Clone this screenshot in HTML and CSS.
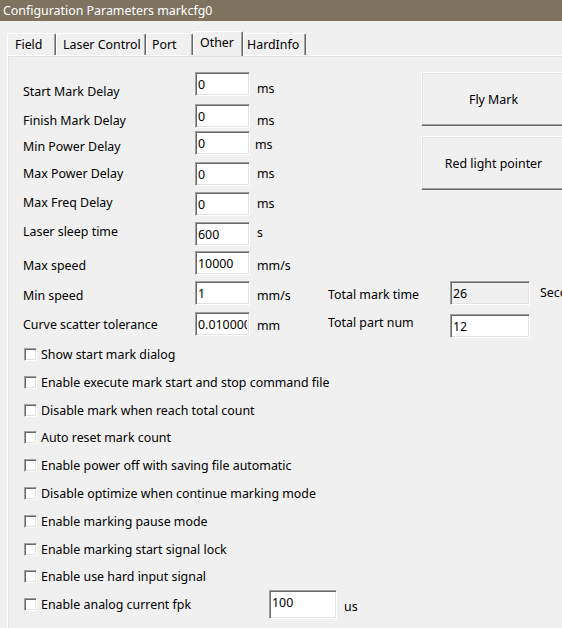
FILE: index.html
```html
<!DOCTYPE html>
<html>
<head>
<meta charset="utf-8">
<meta name="viewport" content="width=device-width, initial-scale=1">
<link rel="stylesheet" href="styles.css">
</head>
<body>

<div class="titlebar">Configuration Parameters markcfg0</div>

<div class="tabs">
  <div class="tab tab--field">Field</div>
  <div class="tab tab--laser">Laser Control</div>
  <div class="tab tab--port">Port</div>
  <div class="tab tab--other tab--active">Other</div>
  <div class="tab tab--hard">HardInfo</div>
</div>

<div class="panel">

  <div class="top">
    <div class="delays">
      <div class="row"><span class="label">Start Mark Delay</span><input class="field" value="0"><span class="unit">ms</span></div>
      <div class="row"><span class="label">Finish Mark Delay</span><input class="field" value="0"><span class="unit">ms</span></div>
      <div class="row"><span class="label">Min Power Delay</span><input class="field" value="0"><span class="unit">ms</span></div>
      <div class="row"><span class="label">Max Power Delay</span><input class="field" value="0"><span class="unit">ms</span></div>
      <div class="row"><span class="label">Max Freq Delay</span><input class="field" value="0"><span class="unit">ms</span></div>
      <div class="row"><span class="label">Laser sleep time</span><input class="field" value="600"><span class="unit">s</span></div>
      <div class="row"><span class="label">Max speed</span><input class="field" value="10000"><span class="unit">mm/s</span></div>
    </div>
    <div class="actions">
      <button class="btn">Fly Mark</button>
      <button class="btn">Red light pointer</button>
    </div>
  </div>

  <div class="totals">
    <div class="row">
      <span class="label">Min speed</span><input class="field" value="1"><span class="unit">mm/s</span>
      <span class="total-label">Total mark time</span><input class="field field--wide field--off" value="26" readonly><span class="total-unit">Second</span>
    </div>
    <div class="row">
      <span class="label">Curve scatter tolerance</span><input class="field" value="0.010000"><span class="unit">mm</span>
      <span class="total-label">Total part num</span><input class="field field--wide" value="12">
    </div>
  </div>

  <ul class="checks">
    <li class="check"><span class="box"></span><span class="check-text">Show start mark dialog</span></li>
    <li class="check"><span class="box"></span><span class="check-text">Enable execute mark start and stop command file</span></li>
    <li class="check"><span class="box"></span><span class="check-text">Disable mark when reach total count</span></li>
    <li class="check"><span class="box"></span><span class="check-text">Auto reset mark count</span></li>
    <li class="check"><span class="box"></span><span class="check-text">Enable power off with saving file automatic</span></li>
    <li class="check"><span class="box"></span><span class="check-text">Disable optimize when continue marking mode</span></li>
    <li class="check"><span class="box"></span><span class="check-text">Enable marking pause mode</span></li>
    <li class="check"><span class="box"></span><span class="check-text">Enable marking start signal lock</span></li>
    <li class="check"><span class="box"></span><span class="check-text">Enable use hard input signal</span></li>
    <li class="check"><span class="box"></span><span class="check-text check-text--fixed">Enable analog current fpk</span><input class="field field--fpk" value="100"><span class="unit">us</span></li>
  </ul>

</div>

</body>
</html>
```

FILE: styles.css
```css
/* base */
* {box-sizing: border-box;}

body {
  margin: 0;
  width: 562px;
  height: 628px;
  overflow: hidden;
  font-family: "Noto Sans", "Open Sans", sans-serif;
  font-size: 12.4px;
  color: #000;
  background: #f0f0f0;
}

/* window caption */
.titlebar {
  height: 21px;
  padding-left: 3px;
  line-height: 21px;
  color: #fff;
  background: #7e735f;
  white-space: nowrap;
}

/* tab strip */
.tabs {
  display: flex;
  align-items: flex-end;
  height: 24px;
  margin-top: 10px;
  padding-left: 7px;
}
.tab {
  flex: none;
  height: 22px;
  padding-top: 2px;
  line-height: 17px;
  white-space: nowrap;
  border-top: 1px solid #fff;
  border-left: 1px solid #fff;
  border-right: 1px solid #696969;
  border-radius: 2px 2px 0 0;
  box-shadow: inset -1px 0 #a0a0a0;
}
.tab--field {width: 49px; padding-left: 7px;}
.tab--laser {width: 90px; padding-left: 6px;}
.tab--port {width: 47px; padding-left: 5px;}
.tab--other {width: 50px; padding-left: 6px;}
.tab--hard {width: 63px; padding-left: 3px;}
.tab--active {
  position: relative;
  z-index: 1;
  height: 25px;
  margin-bottom: -1px;
  background: #f0f0f0;
}

/* page body */
.panel {
  height: 573px;
  margin-left: 7px;
  padding-left: 15px;
  border-top: 1px solid #fff;
  border-left: 1px solid #fff;
  box-shadow: inset 1px 1px #e3e3e3;
}

.top {
  display: flex;
  padding-top: 16px;
}
.delays {flex: none; width: 398px;}
.actions {flex: none;}

.row {
  display: flex;
  align-items: flex-start;
  white-space: nowrap;
}
.row > * {flex: none;}
.label {
  width: 172px;
  line-height: 26px;
}
.unit {
  width: 78px;
  padding-left: 7px;
  line-height: 26px;
}

.delays .row:nth-child(1) {height: 32px;}
.delays .row:nth-child(2) {height: 27px;}
.delays .row:nth-child(3) {height: 31px;}
.delays .row:nth-child(4) {height: 30px;}
.delays .row:nth-child(5) {height: 30px;}
.delays .row:nth-child(6) {height: 29px;}
.delays .row:nth-child(7) {height: 30px;}
.totals .row:nth-child(1) {height: 31px;}
.totals .row:nth-child(2) {height: 28.6px;}

.delays .row:nth-child(1) .label {margin-top: 7px;}
.delays .row:nth-child(2) .label {margin-top: 4px;}
.delays .row:nth-child(3) .label {margin-top: 3px;}
.delays .row:nth-child(4) .label {margin-top: -1px;}
.delays .row:nth-child(5) .label {margin-top: -2px;}
.delays .row:nth-child(6) .label {margin-top: -3px;}
.delays .row:nth-child(7) .label {margin-top: 2px;}
.totals .row:nth-child(1) .label {margin-top: 2px;}

.delays .row:nth-child(1) .unit {margin-top: 4px;}
.delays .row:nth-child(2) .unit {margin-top: 4px;}
.delays .row:nth-child(3) .unit {margin-top: 1px; padding-left: 5px;}
.delays .row:nth-child(4) .unit {margin-top: -1px;}
.delays .row:nth-child(5) .unit {margin-top: -1px;}
.delays .row:nth-child(6) .unit {margin-top: -2px;}
.delays .row:nth-child(7) .unit {margin-top: 2px;}
.totals .row:nth-child(1) .unit {margin-top: 2px;}
.totals .row:nth-child(2) .unit {margin-top: 1px;}

.total-label {
  width: 122px;
  line-height: 26px;
}
.totals .row:nth-child(1) .total-label {margin-top: 1px;}
.totals .row:nth-child(2) .total-label {margin-top: -2px;}
.totals .row:nth-child(2) .field--wide {margin-top: 2px;}
.total-unit {
  padding-left: 10px;
  line-height: 26px;
  margin-top: -1px;
}

/* sunken edit box */
.field {
  flex: none;
  width: 55px;
  height: 24px;
  margin: 0;
  padding: 0 2px;
  font: inherit;
  line-height: 20px;
  color: #000;
  background: #fff;
  border: 1px solid;
  border-color: #a0a0a0 #fff #fff #a0a0a0;
  box-shadow: inset 1px 1px #696969, inset -1px -1px #e3e3e3;
  outline: none;
}
.field--wide {width: 80px;}
.field--off {background: #f0f0f0;}
.field--fpk {
  width: 68px;
  height: 29px;
  padding-bottom: 5px;
}

/* push buttons */
.actions {
  display: flex;
  flex-direction: column;
  gap: 10px;
}
.btn {
  width: 145px;
  height: 54px;
  margin: 0;
  padding: 0;
  font: inherit;
  color: #000;
  background: #f0f0f0;
  border: 1px solid;
  border-color: #fff #696969 #696969 #fff;
  box-shadow: inset -1px -1px #a0a0a0, inset 1px 1px #e3e3e3;
}

/* check boxes */
.checks {
  margin: 0;
  padding: 0 0 0 1px;
  list-style: none;
}
.check {
  display: flex;
  align-items: center;
  height: 27.8px;
  white-space: nowrap;
}
.check > * {flex: none;}
.box {
  width: 13px;
  height: 13px;
  background: #fff;
  border: 1px solid;
  border-color: #a0a0a0 #fff #fff #a0a0a0;
  box-shadow: inset 1px 1px #696969, inset -1px -1px #e3e3e3;
}
.check-text {padding-left: 4px;}
.check-text--fixed {width: 232px;}
.check .unit {width: auto; padding-top: 4px;}
```
